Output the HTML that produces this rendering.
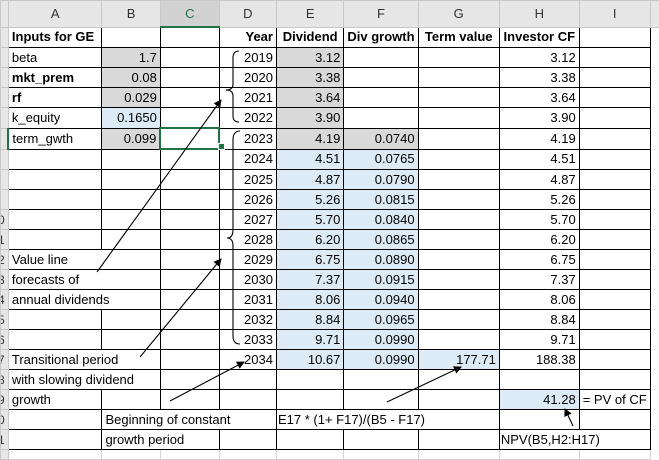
<!DOCTYPE html>
<html><head><meta charset="utf-8"><style>
body{margin:0;width:659px;height:456px;overflow:hidden;background:#fff;font-family:"Liberation Sans",Arial,sans-serif;font-size:13px;color:#000}
table{border-collapse:collapse;table-layout:fixed;position:absolute;left:0;top:0}
td{height:19px;border:1px solid #000;padding:0 3px;white-space:nowrap;overflow:hidden;line-height:18px}
tr.h td{height:25px;background:#e6e6e6;border:1px solid #c8c8c8;text-align:center;color:#333;font-size:13px}
tr.h td.sel{background:#d2d2d2;border-bottom:2px solid #217346;color:#217346}
td.rn{background:#e6e6e6;border:1px solid #c8c8c8;padding:0;text-align:left;color:#333;font-size:12px;text-indent:-4px}
td.j{border:none;border-left:1px solid #000}
.r{text-align:right}.b{font-weight:bold}.c{text-align:center}
.g{background:#d9d9d9}.l{background:#ddebf7}
tr.last td{border-color:#d4d4d4;height:9px}
tr.last td.rn{border-color:#c8c8c8}
</style></head><body>
<table>
<colgroup><col style="width:8px"><col style="width:94px"><col style="width:59px"><col style="width:61px"><col style="width:59px"><col style="width:68px"><col style="width:72px"><col style="width:82px"><col style="width:80px"><col style="width:67px"><col style="width:9px"></colgroup>
<tr class="h"><td></td><td>A</td><td>B</td><td class="sel">C</td><td>D</td><td>E</td><td>F</td><td>G</td><td>H</td><td>I</td><td style="border-right:none"></td></tr>
<tr><td class="rn"></td><td class="b">Inputs for GE</td><td></td><td></td><td class="b r">Year</td><td class="b c">Dividend</td><td class="b c">Div growth</td><td class="b c">Term value</td><td class="b c">Investor CF</td><td></td><td class="j"></td></tr>
<tr><td class="rn"></td><td>beta</td><td class="r g">1.7</td><td></td><td class="r">2019</td><td class="r g">3.12</td><td></td><td></td><td class="r">3.12</td><td></td><td class="j"></td></tr>
<tr><td class="rn"></td><td class="b">mkt_prem</td><td class="r g">0.08</td><td></td><td class="r">2020</td><td class="r g">3.38</td><td></td><td></td><td class="r">3.38</td><td></td><td class="j"></td></tr>
<tr><td class="rn"></td><td class="b">rf</td><td class="r g">0.029</td><td></td><td class="r">2021</td><td class="r g">3.64</td><td></td><td></td><td class="r">3.64</td><td></td><td class="j"></td></tr>
<tr><td class="rn"></td><td>k_equity</td><td class="r l">0.1650</td><td></td><td class="r">2022</td><td class="r g">3.90</td><td></td><td></td><td class="r">3.90</td><td></td><td class="j"></td></tr>
<tr><td class="rn" style="border-right:2px solid #217346"></td><td>term_gwth</td><td class="r g">0.099</td><td style="border:2px solid #217346"></td><td class="r">2023</td><td class="r g">4.19</td><td class="r g">0.0740</td><td></td><td class="r">4.19</td><td></td><td class="j"></td></tr>
<tr><td class="rn"></td><td></td><td></td><td></td><td class="r">2024</td><td class="r l">4.51</td><td class="r l">0.0765</td><td></td><td class="r">4.51</td><td></td><td class="j"></td></tr>
<tr><td class="rn"></td><td></td><td></td><td></td><td class="r">2025</td><td class="r l">4.87</td><td class="r l">0.0790</td><td></td><td class="r">4.87</td><td></td><td class="j"></td></tr>
<tr><td class="rn"></td><td></td><td></td><td></td><td class="r">2026</td><td class="r l">5.26</td><td class="r l">0.0815</td><td></td><td class="r">5.26</td><td></td><td class="j"></td></tr>
<tr><td class="rn">0</td><td></td><td></td><td></td><td class="r">2027</td><td class="r l">5.70</td><td class="r l">0.0840</td><td></td><td class="r">5.70</td><td></td><td class="j"></td></tr>
<tr><td class="rn">1</td><td></td><td></td><td></td><td class="r">2028</td><td class="r l">6.20</td><td class="r l">0.0865</td><td></td><td class="r">6.20</td><td></td><td class="j"></td></tr>
<tr><td class="rn">2</td><td colspan="2">Value line</td><td></td><td class="r">2029</td><td class="r l">6.75</td><td class="r l">0.0890</td><td></td><td class="r">6.75</td><td></td><td class="j"></td></tr>
<tr><td class="rn">3</td><td colspan="2">forecasts of</td><td></td><td class="r">2030</td><td class="r l">7.37</td><td class="r l">0.0915</td><td></td><td class="r">7.37</td><td></td><td class="j"></td></tr>
<tr><td class="rn">4</td><td colspan="2">annual dividends</td><td></td><td class="r">2031</td><td class="r l">8.06</td><td class="r l">0.0940</td><td></td><td class="r">8.06</td><td></td><td class="j"></td></tr>
<tr><td class="rn">5</td><td></td><td></td><td></td><td class="r">2032</td><td class="r l">8.84</td><td class="r l">0.0965</td><td></td><td class="r">8.84</td><td></td><td class="j"></td></tr>
<tr><td class="rn">6</td><td></td><td></td><td></td><td class="r">2033</td><td class="r l">9.71</td><td class="r l">0.0990</td><td></td><td class="r">9.71</td><td></td><td class="j"></td></tr>
<tr><td class="rn">7</td><td colspan="2">Transitional period</td><td></td><td class="r">2034</td><td class="r l">10.67</td><td class="r l">0.0990</td><td class="r l">177.71</td><td class="r">188.38</td><td></td><td class="j"></td></tr>
<tr><td class="rn">8</td><td colspan="2">with slowing dividend</td><td></td><td></td><td></td><td></td><td></td><td></td><td></td><td class="j"></td></tr>
<tr><td class="rn">9</td><td>growth</td><td></td><td></td><td></td><td></td><td></td><td></td><td class="r l">41.28</td><td>= PV of CF</td><td class="j"></td></tr>
<tr><td class="rn">0</td><td></td><td colspan="3">Beginning of constant</td><td colspan="3" style="padding-left:1px">E17 * (1+ F17)/(B5 - F17)</td><td></td><td></td><td class="j"></td></tr>
<tr><td class="rn">1</td><td></td><td colspan="2">growth period</td><td></td><td></td><td></td><td></td><td colspan="2" style="padding-left:1px">NPV(B5,H2:H17)</td><td class="j"></td></tr>
<tr class="last"><td class="rn"></td><td></td><td></td><td></td><td></td><td></td><td></td><td></td><td></td><td></td><td style="border:none"></td></tr>
</table>
<div style="position:absolute;left:218px;top:143px;width:5px;height:5px;background:#217346;border:1px solid #fff"></div>
<svg width="659" height="456" style="position:absolute;left:0;top:0" fill="none" stroke="#000" stroke-width="1.1">
<defs><marker id="a" markerWidth="8" markerHeight="8" refX="7" refY="4" orient="auto" markerUnits="userSpaceOnUse"><path d="M0,0 L8,4 L0,8 z" fill="#000" stroke="none"/></marker></defs>
<path d="M239,51 Q233,51 233,58 L233,84 Q233,90 226,90 Q233,90 233,96 L233,116 Q233,122 239,122"/>
<path d="M240,131 Q233,131 233,140 L233,230 Q233,238 227,238 Q233,238 233,246 L233,336 Q233,344 240,344"/>
<line x1="97" y1="272" x2="221" y2="100" marker-end="url(#a)"/>
<line x1="140" y1="357" x2="221" y2="259" marker-end="url(#a)"/>
<line x1="170" y1="401" x2="244" y2="362" marker-end="url(#a)"/>
<line x1="387" y1="402" x2="461" y2="367" marker-end="url(#a)"/>
<line x1="573" y1="426" x2="565" y2="409" marker-end="url(#a)"/>
</svg>
</body></html>
